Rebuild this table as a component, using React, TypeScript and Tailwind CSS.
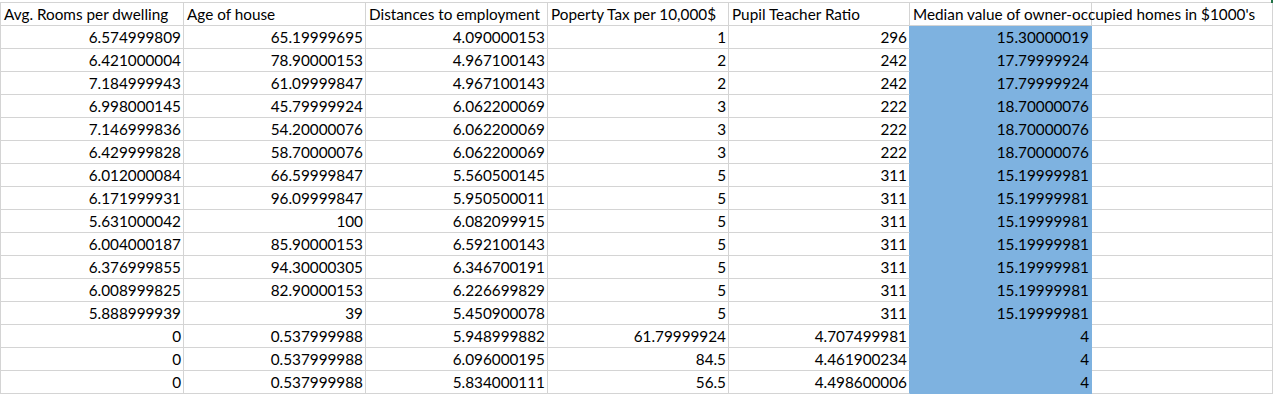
const headers = [
  "Avg. Rooms per dwelling",
  "Age of house",
  "Distances to employment",
  "Poperty Tax per 10,000$",
  "Pupil Teacher Ratio",
  "Median value of owner-occupied homes in $1000's",
  "",
]

const rows: string[][] = [
  ["6.574999809", "65.19999695", "4.090000153", "1", "296", "15.30000019"],
  ["6.421000004", "78.90000153", "4.967100143", "2", "242", "17.79999924"],
  ["7.184999943", "61.09999847", "4.967100143", "2", "242", "17.79999924"],
  ["6.998000145", "45.79999924", "6.062200069", "3", "222", "18.70000076"],
  ["7.146999836", "54.20000076", "6.062200069", "3", "222", "18.70000076"],
  ["6.429999828", "58.70000076", "6.062200069", "3", "222", "18.70000076"],
  ["6.012000084", "66.59999847", "5.560500145", "5", "311", "15.19999981"],
  ["6.171999931", "96.09999847", "5.950500011", "5", "311", "15.19999981"],
  ["5.631000042", "100", "6.082099915", "5", "311", "15.19999981"],
  ["6.004000187", "85.90000153", "6.592100143", "5", "311", "15.19999981"],
  ["6.376999855", "94.30000305", "6.346700191", "5", "311", "15.19999981"],
  ["6.008999825", "82.90000153", "6.226699829", "5", "311", "15.19999981"],
  ["5.888999939", "39", "5.450900078", "5", "311", "15.19999981"],
  ["0", "0.537999988", "5.948999882", "61.79999924", "4.707499981", "4"],
  ["0", "0.537999988", "6.096000195", "84.5", "4.461900234", "4"],
  ["0", "0.537999988", "5.834000111", "56.5", "4.498600006", "4"],
]

const cols = "grid-cols-[184px_182px_182px_181px_181px_182px_181px]"

export default function App() {
  return (
    <div
      className="relative w-[1273px] h-[396px] overflow-hidden bg-white pt-[2px] text-[15.3px] text-black"
      style={{ fontFamily: "Lato, 'Noto Sans', sans-serif" }}
    >
      <div className="absolute right-0 top-0 h-[3px] w-[2px] bg-[#217346]" />
      <div className={`grid ${cols} border-t border-[#d4d4d4]`}>
        {headers.map((h, i) => (
          <div
            key={i}
            className={`flex h-[23px] items-center whitespace-nowrap border-b border-r border-[#d4d4d4] pl-[3px] pt-[1px] ${
              i === 0 ? "border-l" : ""
            }`}
          >
            {h}
          </div>
        ))}
      </div>
      {rows.map((r, ri) => (
        <div key={ri} className={`grid ${cols}`}>
          {r.map((v, ci) => {
            const blue = ci === 5
            const beforeBlue = ci === 4
            return (
              <div
                key={ci}
                className={`flex h-[23px] items-center justify-end whitespace-nowrap border-r pr-[2px] pt-[1px] ${
                  blue
                    ? "border-b border-[#7eb2e0] bg-[#7eb2e0]"
                    : beforeBlue
                      ? "border-b border-b-[#d4d4d4] border-r-[#7eb2e0]"
                      : "border-b border-[#d4d4d4]"
                } ${ci === 0 ? "border-l" : ""}`}
              >
                {v}
              </div>
            )
          })}
          <div className="h-[23px] border-b border-r border-[#d4d4d4]" />
        </div>
      ))}
    </div>
  )
}
